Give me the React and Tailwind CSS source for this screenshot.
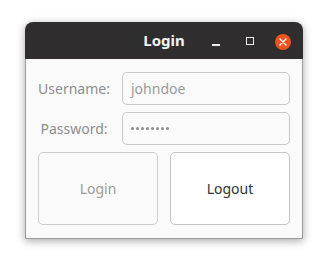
import React from "react";

const Dots = ({ count }) => (
  <div className="flex items-center gap-[2px]">
    {Array.from({ length: count }).map((_, i) => (
      <span key={i} className="block w-[3px] h-[3px] rounded-full bg-[#8a8a8a]" />
    ))}
  </div>
);

const App = () => {
  return (
    <div
      className="w-[328px] h-[267px] bg-white pt-[22px] pl-[25px]"
      style={{ fontFamily: '"Noto Sans", "DejaVu Sans", sans-serif' }}
    >
      <div className="w-[278px] rounded-t-[8px] shadow-[0_2px_8px_rgba(0,0,0,0.35)]">
        {/* Title bar */}
        <div className="relative h-[37px] bg-[#2f2d2d] rounded-t-[8px] flex items-center justify-center">
          <span className="text-[15px] font-bold text-[#f4f4f4] leading-none">Login</span>
          <div className="absolute left-[187px] top-[22px] w-[8px] h-[1.5px] bg-[#eeeeee]" />
          <div className="absolute left-[221px] top-[15px] w-[8px] h-[8px] border border-[#eeeeee]" />
          <div className="absolute left-[250px] top-[12px] w-[16px] h-[16px] rounded-full bg-[#e95420] flex items-center justify-center">
            <svg width="8" height="8" viewBox="0 0 8 8">
              <path d="M1 1L7 7M7 1L1 7" stroke="#fff" strokeWidth="1.3" strokeLinecap="round" />
            </svg>
          </div>
        </div>

        {/* Body */}
        <div className="bg-[#fafafa] border-x border-b border-[#9c9c9c] px-[12px] pt-[13px] pb-[13px]">
          <div className="grid grid-cols-[72px_1fr] gap-x-[12px] gap-y-[7px] items-center">
            <span className="text-[14px] text-[#8d8d8d] text-center">Username:</span>
            <div className="h-[33px] rounded-[5px] border border-[#c8c8c8] bg-[#fafafa] flex items-center px-[8px] text-[14px] text-[#9a9a9a]">
              johndoe
            </div>
            <span className="text-[14px] text-[#8d8d8d] text-center">Password:</span>
            <div className="h-[33px] rounded-[5px] border border-[#c8c8c8] bg-[#fafafa] flex items-center px-[8px]">
              <Dots count={8} />
            </div>
          </div>
          <div className="mt-[7px] grid grid-cols-2 gap-[12px]">
            <div className="h-[73px] rounded-[5px] border border-[#cdcdcd] bg-[#fafafa] flex items-center justify-center text-[14px] text-[#9a9a9a]">
              Login
            </div>
            <div className="h-[73px] rounded-[5px] border border-[#c4c4c4] bg-white flex items-center justify-center text-[14px] text-[#2e3436]">
              Logout
            </div>
          </div>
        </div>
      </div>
    </div>
  );
};

export default App;
